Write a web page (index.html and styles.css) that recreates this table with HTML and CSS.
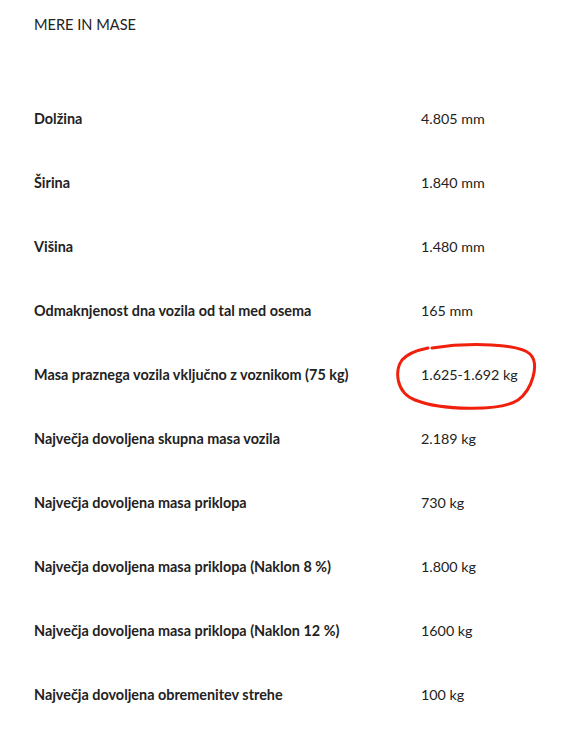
FILE: index.html
```html
<!DOCTYPE html>
<html lang="sl">

<head>
    <meta charset="UTF-8">
    <meta name="viewport" content="width=device-width, initial-scale=1.0">
    <title>Mere in mase</title>
    <link rel="stylesheet" href="styles.css">
</head>

<body>
    <div class="container">
        <h2 class="title">MERE IN MASE</h2>
        <div class="spec-list">
            <div class="row">
                <span class="label">Dolžina</span>
                <span class="value">4.805 mm</span>
            </div>
            <div class="row">
                <span class="label">Širina</span>
                <span class="value">1.840 mm</span>
            </div>
            <div class="row">
                <span class="label">Višina</span>
                <span class="value">1.480 mm</span>
            </div>
            <div class="row">
                <span class="label">Odmaknjenost dna vozila od tal med osema</span>
                <span class="value">165 mm</span>
            </div>
            <div class="row">
                <span class="label">Masa praznega vozila vključno z voznikom (75 kg)</span>
                <span class="value marked">1.625-1.692 kg
                    <svg class="circle" width="145" height="70" viewBox="0 0 145 70">
                        <path d="M37,6 C75,0 125,2 135,12 C145,22 137,48 123,58 C105,70 45,68 20,58 C0,50 0,28 7,18 C13,11 23,8 33,6"
                            fill="none" stroke="#f0200c" stroke-width="3" stroke-linecap="round" />
                    </svg>
                </span>
            </div>
            <div class="row">
                <span class="label">Največja dovoljena skupna masa vozila</span>
                <span class="value">2.189 kg</span>
            </div>
            <div class="row">
                <span class="label">Največja dovoljena masa priklopa</span>
                <span class="value">730 kg</span>
            </div>
            <div class="row">
                <span class="label">Največja dovoljena masa priklopa (Naklon 8 %)</span>
                <span class="value">1.800 kg</span>
            </div>
            <div class="row">
                <span class="label">Največja dovoljena masa priklopa (Naklon 12 %)</span>
                <span class="value">1600 kg</span>
            </div>
            <div class="row">
                <span class="label">Največja dovoljena obremenitev strehe</span>
                <span class="value">100 kg</span>
            </div>
        </div>
    </div>
</body>

</html>
```

FILE: styles.css
```css
* {
    box-sizing: border-box;
    margin: 0;
}

body {
    background-color: #fff;
    color: #222;
    font-family: 'Lato', 'Open Sans', sans-serif;
}

.container {
    padding: 16px 34px 0 34px;
}

.title {
    font-size: 14.6px;
    font-weight: normal;
    line-height: 18px;
    margin-bottom: 52px;
}

.row {
    display: flex;
    align-items: center;
    height: 64px;
}

.label {
    width: 387px;
    flex-shrink: 0;
    font-size: 14.4px;
    font-weight: bold;
}

.value {
    font-size: 14.3px;
}

.marked {
    position: relative;
}

.circle {
    position: absolute;
    left: -26px;
    top: -24px;
    overflow: visible;
}
```
